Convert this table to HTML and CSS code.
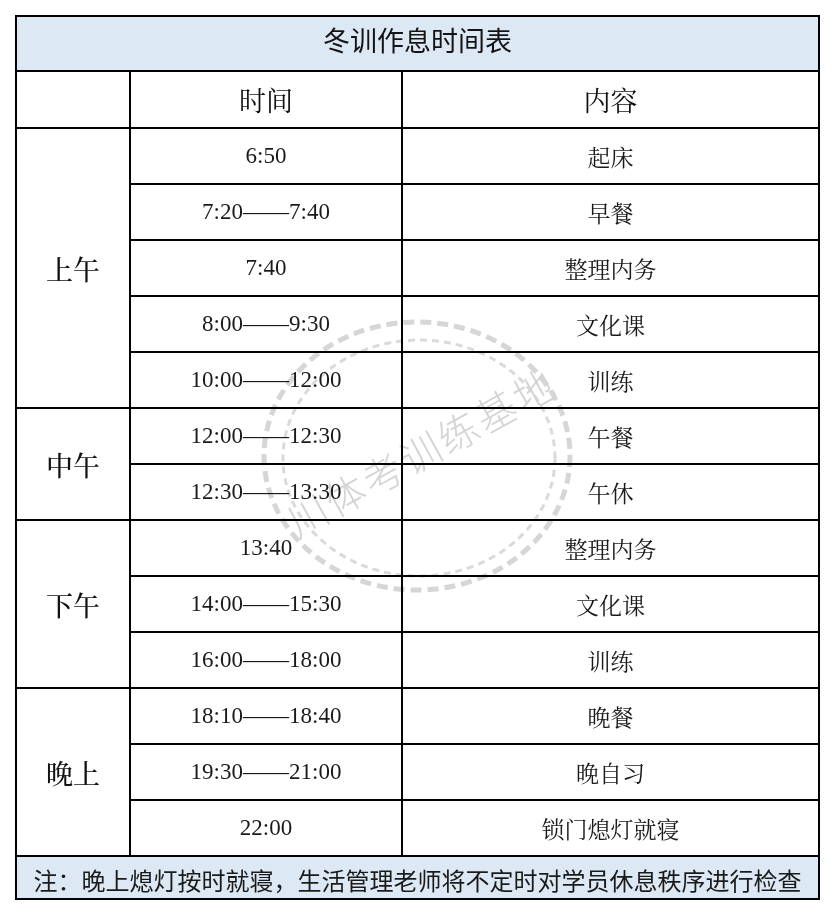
FILE: index.html
```html
<!DOCTYPE html>
<html lang="zh-CN">
<head>
<meta charset="utf-8">
<title>冬训作息时间表</title>
<link rel="stylesheet" href="styles.css">
</head>
<body>
<div class="page">
  <table class="schedule">
    <colgroup>
      <col class="c-period">
      <col class="c-time">
      <col class="c-item">
    </colgroup>
    <tr class="row-title"><th colspan="3" class="title">冬训作息时间表</th></tr>
    <tr class="row-head"><th></th><th class="head">时间</th><th class="head">内容</th></tr>
    <tr><th rowspan="5" class="period">上午</th><td class="time">6:50</td><td class="item">起床</td></tr>
    <tr><td class="time">7:20——7:40</td><td class="item">早餐</td></tr>
    <tr><td class="time">7:40</td><td class="item">整理内务</td></tr>
    <tr><td class="time">8:00——9:30</td><td class="item">文化课</td></tr>
    <tr><td class="time">10:00——12:00</td><td class="item">训练</td></tr>
    <tr><th rowspan="2" class="period">中午</th><td class="time">12:00——12:30</td><td class="item">午餐</td></tr>
    <tr><td class="time">12:30——13:30</td><td class="item">午休</td></tr>
    <tr><th rowspan="3" class="period">下午</th><td class="time">13:40</td><td class="item">整理内务</td></tr>
    <tr><td class="time">14:00——15:30</td><td class="item">文化课</td></tr>
    <tr><td class="time">16:00——18:00</td><td class="item">训练</td></tr>
    <tr><th rowspan="3" class="period">晚上</th><td class="time">18:10——18:40</td><td class="item">晚餐</td></tr>
    <tr><td class="time">19:30——21:00</td><td class="item">晚自习</td></tr>
    <tr><td class="time">22:00</td><td class="item">锁门熄灯就寝</td></tr>
    <tr class="row-note"><td colspan="3" class="note">注：晚上熄灯按时就寝，生活管理老师将不定时对学员休息秩序进行检查</td></tr>
  </table>

  <svg class="stamp" width="836" height="916" viewBox="0 0 836 916" aria-hidden="true">
    <ellipse class="ring-outer" cx="417" cy="456" rx="153" ry="134"/>
    <ellipse class="ring-inner" cx="419" cy="458" rx="136" ry="118"/>
    <text class="stamp-text" x="0" y="0" transform="translate(421 451) rotate(-29)">川体考训练基地</text>
  </svg>
</div>
</body>
</html>
```

FILE: styles.css
```css
html, body {
  margin: 0;
  padding: 0;
  background: #ffffff;
}

.page {
  position: relative;
  width: 836px;
  height: 916px;
  padding: 15px 0 0 15px;
  box-sizing: border-box;
  font-family: "Liberation Serif", "Noto Serif CJK SC", "Noto Sans CJK SC", serif;
  color: #111111;
}

.schedule {
  border-collapse: collapse;
  border: 2px solid #000000;
  width: 805px;
  table-layout: fixed;
}

.c-period { width: 114px; }
.c-time { width: 272px; }
.c-item { width: 417px; }

.schedule th,
.schedule td {
  border: 2px solid #000000;
  padding: 0;
  text-align: center;
  vertical-align: middle;
  font-weight: 400;
  white-space: nowrap;
}

.schedule tr { height: 56px; }
.schedule .row-title { height: 55px; }
.schedule .row-head { height: 57px; }
.schedule .row-note { height: 43px; }

.schedule .title {
  background: #dce9f5;
  font-family: "Noto Sans CJK SC", sans-serif;
  font-size: 27px;
  font-weight: 400;
  color: #141414;
  padding-bottom: 9px;
}

.head {
  font-size: 27px;
}

.schedule .period {
  font-size: 27px;
  font-weight: 500;
}

.time {
  font-size: 23px;
  color: #1a1a1a;
}

.item {
  font-size: 23px;
  color: #1a1a1a;
}

.schedule .note {
  background: #dce9f5;
  font-family: "Noto Sans CJK SC", sans-serif;
  font-size: 24px;
  color: #1a1a1a;
  padding-top: 3px;
}

.stamp {
  position: absolute;
  left: 0;
  top: 0;
  pointer-events: none;
  mix-blend-mode: multiply;
}

.ring-outer {
  fill: none;
  stroke: #d6d6d6;
  stroke-width: 5;
  stroke-dasharray: 11 6;
}

.ring-inner {
  fill: none;
  stroke: #dadada;
  stroke-width: 3;
  stroke-dasharray: 7 5;
}

.stamp-text {
  font-family: "Noto Sans CJK SC", sans-serif;
  font-weight: 300;
  font-size: 40px;
  letter-spacing: 3px;
  fill: #d4d4d4;
  text-anchor: middle;
  dominant-baseline: central;
}
```
